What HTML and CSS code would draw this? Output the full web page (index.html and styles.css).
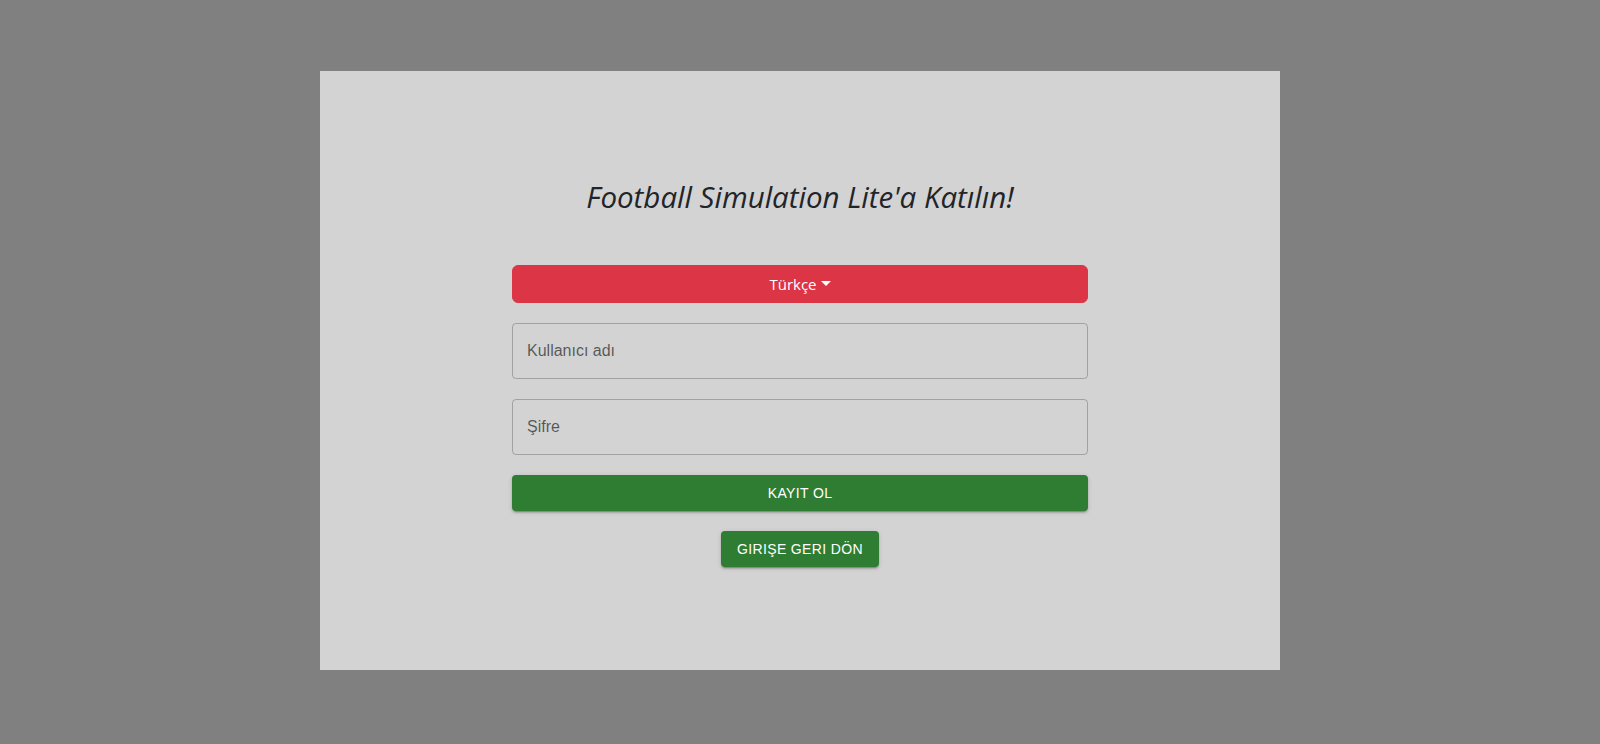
FILE: index.html
```html
<!DOCTYPE html>
<html lang="tr">
<head>
<meta charset="utf-8">
<title>Kayıt Ol</title>
<link rel="stylesheet" href="styles.css">
</head>
<body>
  <main class="card">
    <div class="content">
      <h3 class="title">Football Simulation Lite'a Katılın!</h3>
      <button class="lang-btn" type="button">Türkçe<span class="caret"></span></button>
      <div class="field"><span class="label">Kullanıcı adı</span></div>
      <div class="field"><span class="label">Şifre</span></div>
      <button class="green-btn full" type="button">KAYIT OL</button>
      <div class="back-row"><button class="green-btn" type="button">GIRIŞE GERI DÖN</button></div>
    </div>
  </main>
</body>
</html>
```

FILE: styles.css
```css
html, body {
  margin: 0;
  padding: 0;
}
body {
  background: #808080;
  min-height: 744px;
  box-sizing: border-box;
  padding-top: 71px;
  font-family: "Liberation Sans", Arial, sans-serif;
}
.card {
  width: 960px;
  height: 599px;
  margin: 0 auto;
  background: #d3d3d3;
  box-sizing: border-box;
  padding-top: 109px;
}
.content {
  width: 576px;
  margin: 0 auto;
  display: flex;
  flex-direction: column;
}
.title {
  margin: 0 0 51px;
  height: 34px;
  text-align: center;
  font-family: "Open Sans", "Noto Sans", sans-serif;
  font-style: italic;
  font-weight: 400;
  font-size: 29.5px;
  line-height: 34px;
  color: #212529;
}
.lang-btn {
  height: 38px;
  border: 1px solid #dc3545;
  background: #dc3545;
  color: #fff;
  border-radius: 6px;
  font-family: "Open Sans", "Noto Sans", sans-serif;
  font-size: 15px;
  line-height: 1.5;
  padding: 6px 12px;
  margin-bottom: 20px;
  cursor: pointer;
}
.caret {
  display: inline-block;
  margin-left: 4px;
  vertical-align: 4px;
  border-top: 5px solid #fff;
  border-left: 5px solid transparent;
  border-right: 5px solid transparent;
}
.field {
  height: 56px;
  box-sizing: border-box;
  border: 1px solid rgba(0, 0, 0, 0.23);
  border-radius: 4px;
  display: flex;
  align-items: center;
  padding: 0 14px;
  margin-bottom: 20px;
}
.label {
  font-size: 16px;
  color: rgba(0, 0, 0, 0.6);
}
.green-btn {
  height: 36px;
  box-sizing: border-box;
  border: none;
  border-radius: 4px;
  background: #2e7d32;
  color: #fff;
  font-family: "Liberation Sans", Arial, sans-serif;
  font-size: 14px;
  font-weight: 400;
  letter-spacing: 0.35px;
  padding: 6px 16px;
  box-shadow: 0 3px 1px -2px rgba(0,0,0,0.2), 0 2px 2px 0 rgba(0,0,0,0.14), 0 1px 5px 0 rgba(0,0,0,0.12);
  cursor: pointer;
}
.green-btn.full {
  width: 100%;
  margin-bottom: 20px;
}
.back-row {
  display: flex;
  justify-content: center;
}
```
